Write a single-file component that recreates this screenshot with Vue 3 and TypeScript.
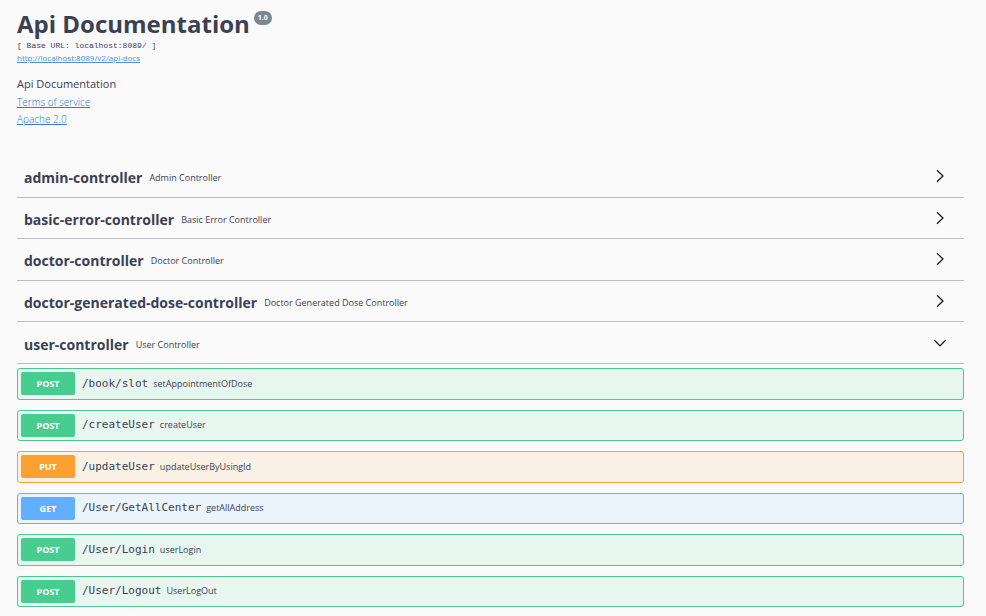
<script setup lang="ts">
import { ref } from 'vue'

type Method = 'post' | 'put' | 'get'

interface Operation {
  method: Method
  path: string
  summary: string
}

interface Tag {
  name: string
  description: string
  operations: Operation[]
}

const tags: Tag[] = [
  { name: 'admin-controller', description: 'Admin Controller', operations: [] },
  { name: 'basic-error-controller', description: 'Basic Error Controller', operations: [] },
  { name: 'doctor-controller', description: 'Doctor Controller', operations: [] },
  { name: 'doctor-generated-dose-controller', description: 'Doctor Generated Dose Controller', operations: [] },
  {
    name: 'user-controller',
    description: 'User Controller',
    operations: [
      { method: 'post', path: '/book/slot', summary: 'setAppointmentOfDose' },
      { method: 'post', path: '/createUser', summary: 'createUser' },
      { method: 'put', path: '/updateUser', summary: 'updateUserByUsingId' },
      { method: 'get', path: '/User/GetAllCenter', summary: 'getAllAddress' },
      { method: 'post', path: '/User/Login', summary: 'userLogin' },
      { method: 'post', path: '/User/Logout', summary: 'UserLogOut' },
    ],
  },
]

const openTag = ref<string>('user-controller')

function toggle(name: string): void {
  openTag.value = openTag.value === name ? '' : name
}
</script>

<template>
  <main class="page">
    <header class="info">
      <div class="title-row">
        <h1 class="title">Api Documentation</h1>
        <span class="version">1.0</span>
      </div>
      <p class="base-url">[ Base URL: localhost:8089/ ]</p>
      <a class="spec-link" href="http://localhost:8089/v2/api-docs">http://localhost:8089/v2/api-docs</a>
      <p class="description">Api Documentation</p>
      <a class="info-link" href="#terms">Terms of service</a>
      <a class="info-link" href="#license">Apache 2.0</a>
    </header>

    <section class="tags">
      <h2 v-for="tag in tags" :key="tag.name" class="tag">
        <button class="tag-toggle" type="button" :aria-expanded="openTag === tag.name" @click="toggle(tag.name)">
          <span class="tag-name">{{ tag.name }}</span>
          <span class="tag-description">{{ tag.description }}</span>
          <svg class="arrow" :class="{ open: openTag === tag.name }" viewBox="0 0 14 14" aria-hidden="true">
            <path d="M4 1.2 L10 7 L4 12.8" />
          </svg>
        </button>
      </h2>
    </section>

    <template v-for="tag in tags" :key="tag.name">
      <section v-if="openTag === tag.name && tag.operations.length" class="operations">
        <button v-for="op in tag.operations" :key="op.path" class="operation" :class="op.method" type="button">
          <span class="method">{{ op.method.toUpperCase() }}</span>
          <span class="path">{{ op.path }}</span>
          <span class="summary">{{ op.summary }}</span>
        </button>
      </section>
    </template>
  </main>
</template>

<style>
body {
  margin: 0;
  background: #fafafa;
}
</style>

<style scoped>
.page {
  padding: 8px 22px 8px 17px;
  color: #3b4151;
  font-family: 'Open Sans', 'Noto Sans', sans-serif;
}

button {
  font: inherit;
  color: inherit;
  text-align: left;
  cursor: pointer;
}

.info {
  display: flex;
  flex-direction: column;
  align-items: flex-start;
  min-height: 148px;
}

.title-row {
  display: flex;
  align-items: flex-start;
  gap: 4px;
}

.title {
  margin: 0;
  font-size: 24px;
  line-height: 32px;
  font-weight: 700;
}

.version {
  margin-top: 3px;
  padding: 0 4px;
  border-radius: 7px;
  background: #7d8492;
  color: #fff;
  font-size: 7px;
  line-height: 14px;
  font-weight: 700;
}

.base-url {
  margin: 0;
  font-family: 'Liberation Mono', monospace;
  font-size: 8px;
  line-height: 12px;
  white-space: pre;
}

a {
  color: #4990e2;
}

.spec-link {
  font-size: 8px;
  line-height: 12px;
}

.description {
  margin: 12px 0 2px;
  font-size: 11px;
  line-height: 16px;
}

.info-link {
  color: #3279d0;
  font-size: 10px;
  line-height: 17px;
  font-weight: 300;
}

.tags {
  display: grid;
  grid-auto-rows: 1fr;
  min-height: 208px;
}

.tag {
  display: flex;
  margin: 0;
  border-bottom: 1px solid #bbbdc4;
  font-weight: 400;
}

.tag-toggle {
  display: flex;
  flex: 1;
  align-items: center;
  gap: 7px;
  padding: 4px 17px 0 7px;
  border: 0;
  background: none;
}

.tag-name {
  font-size: 14px;
  line-height: 20px;
  font-weight: 700;
}

.tag-description {
  flex: 1;
  font-size: 9px;
  line-height: 16px;
}

.arrow {
  width: 14px;
  height: 14px;
  margin-bottom: 4px;
  fill: none;
  stroke: #111;
  stroke-width: 1.2;
}

.arrow.open {
  transform: rotate(90deg);
}

.operations {
  display: grid;
  grid-auto-rows: 1fr;
  gap: 10px;
  min-height: 239px;
  margin-top: 4px;
}

.operation {
  display: flex;
  align-items: center;
  padding: 3px;
  border: 1px solid;
  border-radius: 3px;
}

.method {
  width: 54px;
  border-radius: 2px;
  color: #fff;
  font-size: 9px;
  line-height: 23px;
  font-weight: 700;
  text-align: center;
}

.path {
  margin: 0 5px 0 7px;
  font-family: 'DejaVu Sans Mono', monospace;
  font-size: 11px;
  line-height: 16px;
}

.summary {
  font-size: 9px;
  line-height: 16px;
}

.post {
  border-color: #49cc90;
  background: #e8f6f0;
}

.post .method {
  background: #49cc90;
}

.put {
  border-color: #fca130;
  background: #faf1e6;
}

.put .method {
  background: #fca130;
}

.get {
  border-color: #61affe;
  background: #ebf3fb;
}

.get .method {
  background: #61affe;
}
</style>
